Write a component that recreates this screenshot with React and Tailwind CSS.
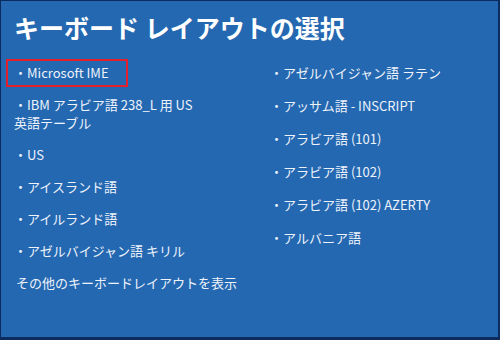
import React from 'react';

const leftItems = [
  { label: 'Microsoft IME', selected: true },
  { label: 'IBM アラビア語 238_L 用 US', second: '英語テーブル' },
  { label: 'US' },
  { label: 'アイスランド語' },
  { label: 'アイルランド語' },
  { label: 'アゼルバイジャン語 キリル' },
];

const rightItems = [
  'アゼルバイジャン語 ラテン',
  'アッサム語 - INSCRIPT',
  'アラビア語 (101)',
  'アラビア語 (102)',
  'アラビア語 (102) AZERTY',
  'アルバニア語',
];

function Item({ label, second, selected }) {
  return (
    <div
      className={`w-fit whitespace-nowrap border-2 py-[3px] pl-[6px] pr-[17px] text-[13px] leading-[18px] ${
        selected ? 'border-[#e3202c]' : 'border-transparent'
      }`}
    >
      ・{label}
      {second && (
        <>
          <br />
          {second}
        </>
      )}
    </div>
  );
}

export default function App() {
  return (
    <div
      className="h-[340px] w-[500px] overflow-hidden border-b-[3px] border-l border-r-2 border-t border-[#0c2b5e] bg-[#2468b1] text-[#eef3fb]"
      style={{ fontFamily: '"Noto Sans CJK JP", "Noto Sans", sans-serif' }}
    >
      <h1 className="pl-[13px] pt-[9px] text-[25px] font-bold leading-[34px] text-white">
        キーボード レイアウトの選択
      </h1>
      <div className="mt-[15px] grid grid-cols-[256px_1fr] pl-[5px]">
        <div className="flex flex-col gap-[4px]">
          {leftItems.map((it) => (
            <Item key={it.label} {...it} />
          ))}
          <div className="border-2 border-transparent py-[3px] pl-[8px] text-[13px] leading-[18px]">
            その他のキーボードレイアウトを表示
          </div>
        </div>
        <div className="flex flex-col gap-[5px]">
          {rightItems.map((label) => (
            <Item key={label} label={label} />
          ))}
        </div>
      </div>
    </div>
  );
}
